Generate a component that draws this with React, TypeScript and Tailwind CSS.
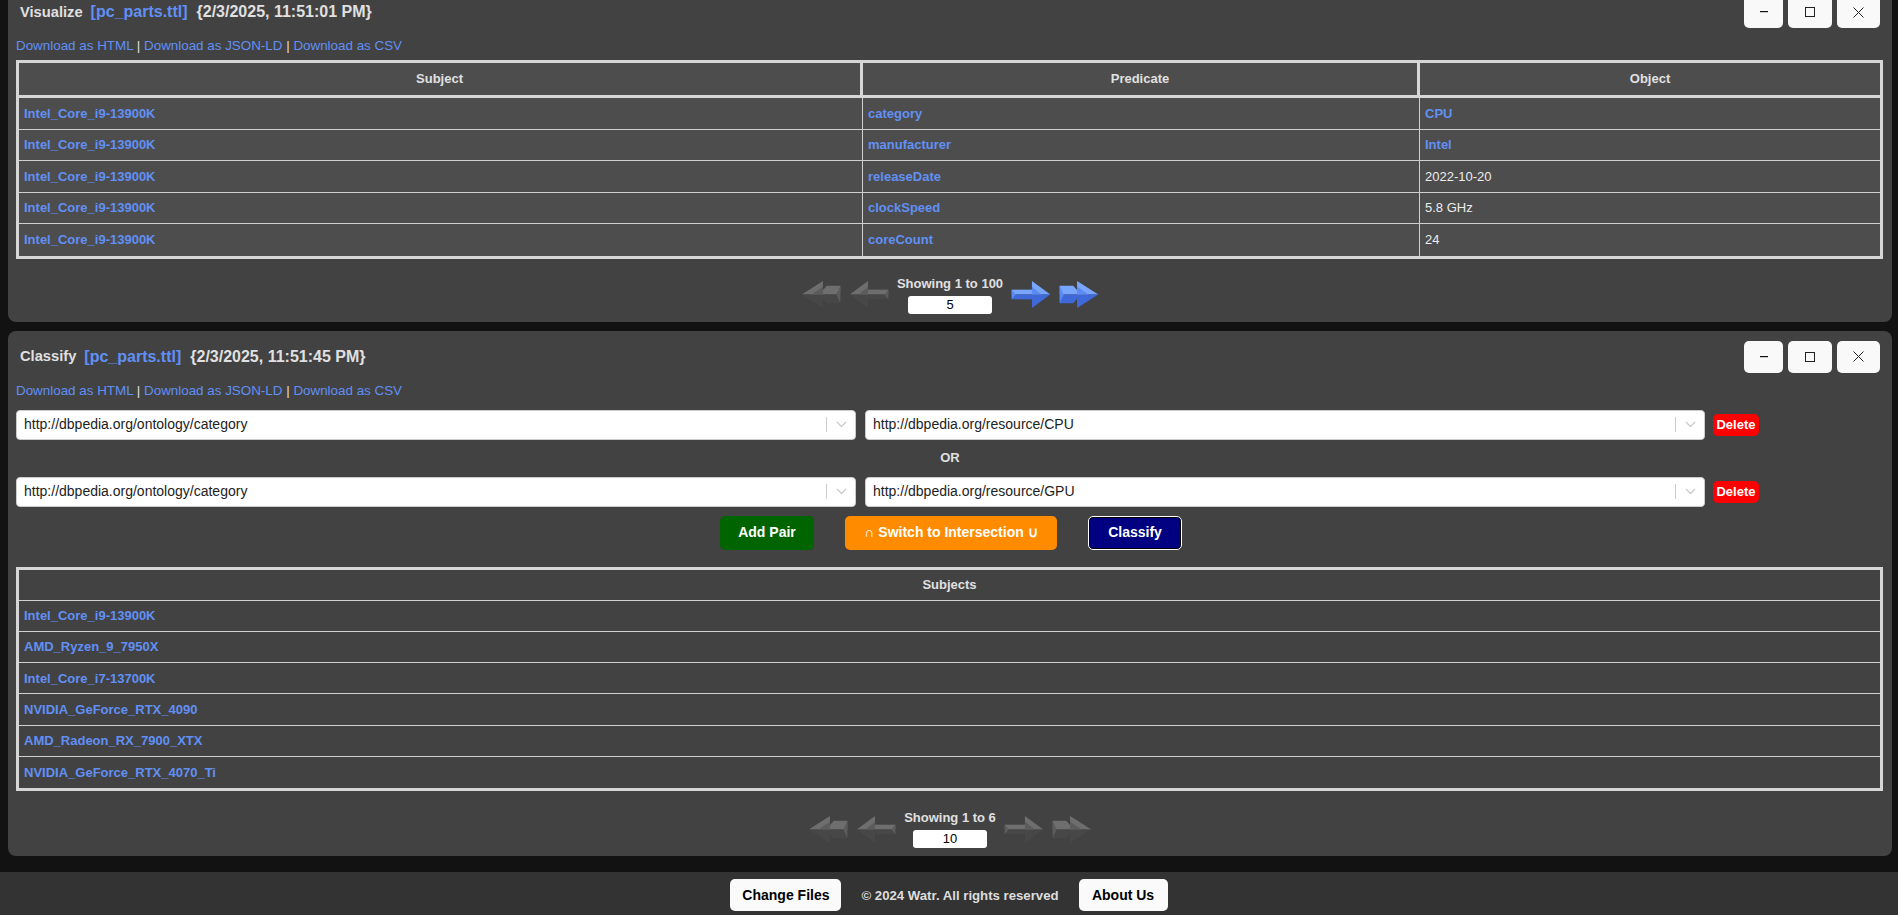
import React from 'react';

const LINK = 'text-[#6190f4]';

type ArrowKind = 'first' | 'prev' | 'next' | 'last';

const Arrow: React.FC<{ kind: ArrowKind; active?: boolean }> = ({ kind, active }) => {
  const light = active ? '#78a6ff' : '#6e6e6e';
  const mid = active ? '#5b8af2' : '#5c5c5c';
  const dark = active ? '#3f68d8' : '#474747';
  const flip = kind === 'first' || kind === 'prev';
  const double = kind === 'first' || kind === 'last';
  return (
    <svg width="40" height="27" viewBox="0 0 40 28" className={flip ? '-scale-x-100' : ''}>
      {double ? (
        <>
          <polygon points="0,5 14,5 22,14 0,14" fill={light} />
          <polygon points="0,14 22,14 14,23 0,23" fill={dark} />
          <polygon points="0,5 4,14 0,23" fill={mid} />
          <polygon points="18,0 40,14 18,14" fill={light} />
          <polygon points="18,14 40,14 18,28" fill={dark} />
          <polygon points="18,6 30,14 18,14" fill={mid} />
        </>
      ) : (
        <>
          <polygon points="0,9 23,9 23,14 0,14" fill={light} />
          <polygon points="0,14 23,14 23,19 0,19" fill={dark} />
          <polygon points="0,9 4,14 0,19" fill={mid} />
          <polygon points="21,0 40,14 21,14" fill={light} />
          <polygon points="21,14 40,14 21,28" fill={dark} />
          <polygon points="21,6 31,14 21,14" fill={mid} />
        </>
      )}
    </svg>
  );
};

const Pager: React.FC<{ text: string; value: string; active?: boolean }> = ({ text, value, active }) => (
  <div className="flex items-center justify-center gap-[8px]">
    <Arrow kind="first" />
    <Arrow kind="prev" />
    <div className="flex flex-col items-center">
      <span className="text-[13px] leading-[16px] font-bold text-[#e0e0e0]">{text}</span>
      <div className="mt-[4px] h-[18px] w-[80%] rounded-[3px] bg-white text-center text-[13px] leading-[18px] text-black">
        {value}
      </div>
    </div>
    <Arrow kind="next" active={active} />
    <Arrow kind="last" active={active} />
  </div>
);

const WindowButtons: React.FC = () => (
  <div className="flex gap-[5px]">
    <button className="flex h-[32px] w-[39px] items-center justify-center rounded-[5px] bg-[#f9f9f9]">
      <svg width="8" height="2" viewBox="0 0 8 2">
        <rect x="0" y="0" width="8" height="1.2" fill="#111" />
      </svg>
    </button>
    <button className="flex h-[32px] w-[44px] items-center justify-center rounded-[5px] bg-[#f9f9f9]">
      <svg width="10" height="10" viewBox="0 0 10 10">
        <rect x="0.5" y="0.5" width="9" height="9" fill="none" stroke="#222" strokeWidth="1" />
      </svg>
    </button>
    <button className="flex h-[32px] w-[43px] items-center justify-center rounded-[5px] bg-[#f9f9f9]">
      <svg width="11" height="11" viewBox="0 0 11 11">
        <path d="M0.5 0.5 L10.5 10.5 M10.5 0.5 L0.5 10.5" stroke="#222" strokeWidth="1" />
      </svg>
    </button>
  </div>
);

const PanelHeader: React.FC<{ name: string; time: string }> = ({ name, time }) => (
  <div className="flex h-[42px] items-center justify-between pt-[10px] pr-[12px]">
    <div className="flex items-center gap-[8px] pl-[12px] font-bold text-[#e0e0e0]">
      <span className="text-[14.7px]">{name}</span>
      <span className={`text-[16px] ${LINK}`}>[pc_parts.ttl]</span>
      <span className="ml-[1px] text-[16px]">{time}</span>
    </div>
    <WindowButtons />
  </div>
);

const Downloads: React.FC = () => (
  <div className="mt-[10px] h-[16px] pl-[8px] text-[13.4px] leading-[16px]">
    <a className={LINK}>Download as HTML</a>
    <span className="text-[#e0e0e0]"> | </span>
    <a className={LINK}>Download as JSON-LD</a>
    <span className="text-[#e0e0e0]"> | </span>
    <a className={LINK}>Download as CSV</a>
  </div>
);

const triples: [string, string, string, boolean][] = [
  ['Intel_Core_i9-13900K', 'category', 'CPU', true],
  ['Intel_Core_i9-13900K', 'manufacturer', 'Intel', true],
  ['Intel_Core_i9-13900K', 'releaseDate', '2022-10-20', false],
  ['Intel_Core_i9-13900K', 'clockSpeed', '5.8 GHz', false],
  ['Intel_Core_i9-13900K', 'coreCount', '24', false],
];

const subjects = [
  'Intel_Core_i9-13900K',
  'AMD_Ryzen_9_7950X',
  'Intel_Core_i7-13700K',
  'NVIDIA_GeForce_RTX_4090',
  'AMD_Radeon_RX_7900_XTX',
  'NVIDIA_GeForce_RTX_4070_Ti',
];

const Select: React.FC<{ value: string }> = ({ value }) => (
  <div className="flex h-[30px] w-[840px] items-center rounded-[4px] border border-[#cccccc] bg-white">
    <span className="flex-1 pl-[7px] text-[14px] text-[#222]">{value}</span>
    <span className="h-[15px] w-px bg-[#cccccc]" />
    <span className="flex w-[28px] items-center justify-center">
      <svg width="11" height="7" viewBox="0 0 11 7">
        <path d="M1 1 L5.5 5.5 L10 1" fill="none" stroke="#cccccc" strokeWidth="1.4" />
      </svg>
    </span>
  </div>
);

const PairRow: React.FC<{ left: string; right: string }> = ({ left, right }) => (
  <div className="flex items-center pl-[8px]">
    <Select value={left} />
    <div className="ml-[9px]">
      <Select value={right} />
    </div>
    <button className="ml-[8px] h-[22px] w-[46px] rounded-[5px] bg-[#ff0000] text-[13px] font-bold text-white">
      Delete
    </button>
  </div>
);

const cellLine = 'border-b border-[#cfcfcf]';

export default function App() {
  return (
    <div className="h-[915px] overflow-hidden bg-[#121212] font-['Liberation_Sans',Arial,sans-serif]">
      <div className="-mt-[14px] flex flex-col gap-[9px] pl-[8px] pr-[6px]">
        {/* Visualize panel */}
        <section className="rounded-lg bg-[#424242] pb-[8px]">
          <PanelHeader name="Visualize" time="{2/3/2025, 11:51:01 PM}" />
          <Downloads />
          <div className="mt-[6px] pl-[8px] pr-[9px]">
            <table className="w-full table-fixed border-separate border-spacing-0 border-[3px] border-[#d6d6d6] bg-[#4d4d4d] text-[13px]">
              <colgroup>
                <col className="w-[844px]" />
                <col className="w-[557px]" />
                <col />
              </colgroup>
              <thead>
                <tr className="h-[35px]">
                  {['Subject', 'Predicate', 'Object'].map((h, i) => (
                    <th
                      key={h}
                      className={`border-b-[3px] border-[#d6d6d6] font-bold text-[#e0e0e0] ${i < 2 ? 'border-r-[3px]' : ''}`}
                    >
                      {h}
                    </th>
                  ))}
                </tr>
              </thead>
              <tbody>
                {triples.map(([s, p, o, isLink], i) => {
                  const line = i < triples.length - 1 ? cellLine : '';
                  return (
                    <tr key={i} className="h-[31.5px]">
                      <td className={`${line} border-r border-r-[#cfcfcf] px-[5px] font-bold ${LINK}`}>{s}</td>
                      <td className={`${line} border-r border-r-[#cfcfcf] px-[5px] font-bold ${LINK}`}>{p}</td>
                      <td className={`${line} px-[5px] ${isLink ? `font-bold ${LINK}` : 'text-[#ececec]'}`}>{o}</td>
                    </tr>
                  );
                })}
              </tbody>
            </table>
          </div>
          <div className="mt-[17px]">
            <Pager text="Showing 1 to 100" value="5" active />
          </div>
        </section>

        {/* Classify panel */}
        <section className="rounded-lg bg-[#424242] pb-[8px]">
          <PanelHeader name="Classify" time="{2/3/2025, 11:51:45 PM}" />
          <Downloads />
          <div className="mt-[11px]">
            <PairRow left="http://dbpedia.org/ontology/category" right="http://dbpedia.org/resource/CPU" />
          </div>
          <div className="flex h-[37px] items-center justify-center text-[13px] font-bold text-[#e0e0e0]">OR</div>
          <PairRow left="http://dbpedia.org/ontology/category" right="http://dbpedia.org/resource/GPU" />
          <div className="mt-[9px] flex justify-center gap-[31px] pl-[2px]">
            <button className="h-[34px] w-[94px] rounded-[5px] bg-[#006400] text-[14px] font-bold text-white">
              Add Pair
            </button>
            <button className="h-[34px] w-[212px] rounded-[5px] bg-[#ff8c00] text-[14px] font-bold text-white">
              ∩ Switch to Intersection ∪
            </button>
            <button className="h-[34px] w-[94px] rounded-[5px] border border-white bg-[#000080] text-[14px] font-bold text-white shadow-[inset_0_0_0_1px_#000]">
              Classify
            </button>
          </div>
          <div className="mt-[17px] pl-[8px] pr-[9px]">
            <table className="w-full border-separate border-spacing-0 border-[3px] border-[#d6d6d6] text-[13px]">
              <thead>
                <tr className="h-[31px]">
                  <th className={`${cellLine} font-bold text-[#e0e0e0]`}>Subjects</th>
                </tr>
              </thead>
              <tbody>
                {subjects.map((s, i) => (
                  <tr key={s} className="h-[31.33px]">
                    <td className={`${i < subjects.length - 1 ? cellLine : ''} px-[5px] font-bold ${LINK}`}>{s}</td>
                  </tr>
                ))}
              </tbody>
            </table>
          </div>
          <div className="mt-[19px]">
            <Pager text="Showing 1 to 6" value="10" />
          </div>
        </section>
      </div>

      <footer className="mt-[16px] flex h-[46px] items-center justify-center gap-[20px] bg-[#333333]">
        <button className="h-[32px] w-[111px] rounded-[5px] bg-[#fafafa] text-[14px] font-bold text-black">
          Change Files
        </button>
        <span className="text-[13.2px] font-bold text-[#dddddd]">© 2024 Watr. All rights reserved</span>
        <button className="h-[32px] w-[89px] rounded-[5px] bg-[#fafafa] text-[14px] font-bold text-black">
          About Us
        </button>
      </footer>
    </div>
  );
}
